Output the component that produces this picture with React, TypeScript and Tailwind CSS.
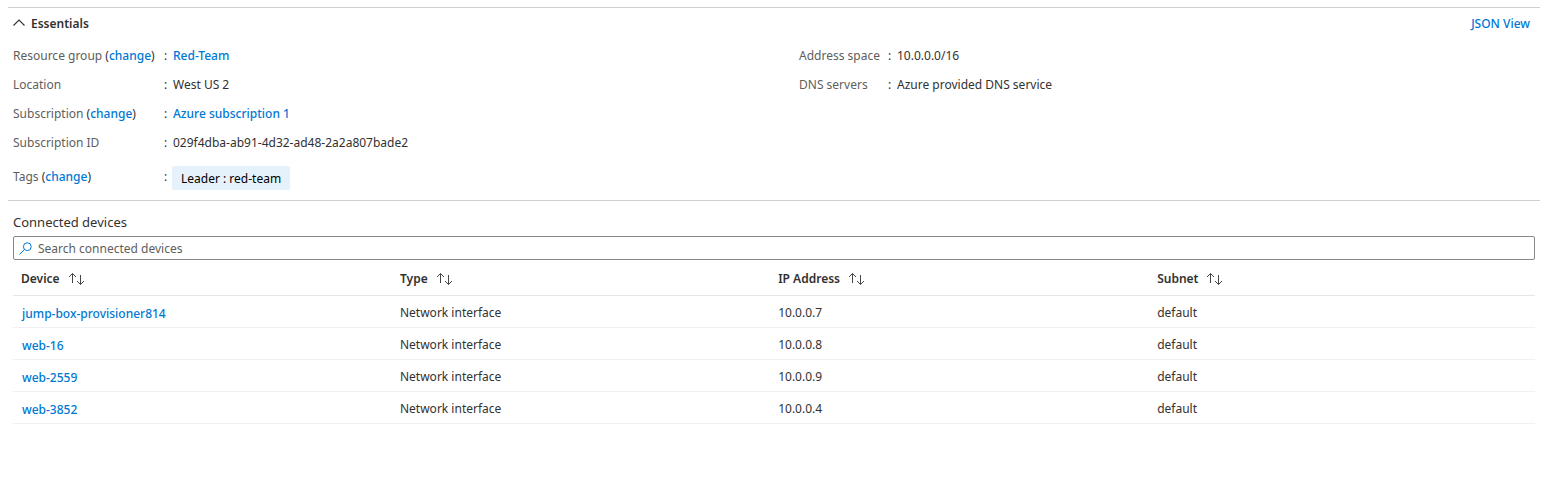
import { useState, type ReactNode } from "react";

type Field = { label: string; change?: boolean; value: ReactNode };

const linkClass = "font-medium text-[#0078d4] hover:underline";

const leftFields: Field[] = [
  { label: "Resource group", change: true, value: <a href="#group" className={linkClass}>Red-Team</a> },
  { label: "Location", value: "West US 2" },
  { label: "Subscription", change: true, value: <a href="#subscription" className={linkClass}>Azure subscription 1</a> },
  { label: "Subscription ID", value: "029f4dba-ab91-4d32-ad48-2a2a807bade2" },
];

const rightFields: Field[] = [
  { label: "Address space", value: "10.0.0.0/16" },
  { label: "DNS servers", value: "Azure provided DNS service" },
];

const columns = ["Device", "Type", "IP Address", "Subnet"];

const devices = [
  { name: "jump-box-provisioner814", type: "Network interface", ip: "10.0.0.7", subnet: "default" },
  { name: "web-16", type: "Network interface", ip: "10.0.0.8", subnet: "default" },
  { name: "web-2559", type: "Network interface", ip: "10.0.0.9", subnet: "default" },
  { name: "web-3852", type: "Network interface", ip: "10.0.0.4", subnet: "default" },
];

function FieldLabel({ label, change }: { label: string; change?: boolean }) {
  return (
    <dt className="text-[#605e5c]">
      {label}
      {change && (
        <>
          {" "}
          <span className="text-[#323130]">
            (<a href="#change" className={linkClass}>change</a>)
          </span>
        </>
      )}
    </dt>
  );
}

function SortIcon() {
  return (
    <svg viewBox="0 0 18 14" className="h-3.5 w-[18px]" fill="none" stroke="#484644" strokeWidth="1" aria-hidden="true">
      <path d="M4.500 11V1.500M1 5l3.500-3.500L8 5M12.500 3v9.500M9 9l3.500 3.500L16 9" />
    </svg>
  );
}

export default function App() {
  const [open, setOpen] = useState(true);
  const [query, setQuery] = useState("");
  const shown = devices.filter((d) => d.name.includes(query.toLowerCase()));

  return (
    <main className="bg-white pt-[7px] pr-[17px] pl-2 font-['Noto_Sans',sans-serif] text-xs text-[#323130]">
      <section className="border-y border-[#d2d0ce] pr-[5px] pb-2.5 pl-[5px]">
        <div className="flex items-center justify-between pt-1.5 pr-[5px]">
          <button type="button" aria-expanded={open} onClick={() => setOpen(!open)} className="flex h-5 items-center gap-1.5 font-semibold">
            <svg viewBox="0 0 12 10" className={open ? "h-2.5 w-3" : "h-2.5 w-3 rotate-180"} fill="none" stroke="#323130" strokeWidth="1.1" aria-hidden="true">
              <path d="M.5 6.500 6 1l5.500 5.500" />
            </svg>
            Essentials
          </button>
          <a href="#json" className={linkClass}>JSON View</a>
        </div>
        {open && (
          <div className="grid grid-cols-2 gap-x-[50px] pt-[7px]">
            <dl>
              {leftFields.map((f) => (
                <div key={f.label} className="grid h-[29px] grid-cols-[151px_9px_1fr] items-center">
                  <FieldLabel label={f.label} change={f.change} />
                  <span>:</span>
                  <dd>{f.value}</dd>
                </div>
              ))}
              <div className="grid grid-cols-[151px_8px_1fr] items-start pt-[9px] leading-[22px]">
                <FieldLabel label="Tags" change />
                <span>:</span>
                <dd>
                  <span className="inline-flex h-6 items-center rounded-xs bg-[#e5f1fb] px-[9px] pt-0.5 align-top text-black">Leader : red-team</span>
                </dd>
              </div>
            </dl>
            <dl>
              {rightFields.map((f) => (
                <div key={f.label} className="grid h-[29px] grid-cols-[89px_9px_1fr] items-center">
                  <FieldLabel label={f.label} />
                  <span>:</span>
                  <dd>{f.value}</dd>
                </div>
              ))}
            </dl>
          </div>
        )}
      </section>

      <section className="px-[5px] pt-[11px]">
        <label htmlFor="device-search" className="block pb-1 text-[13px] leading-5">Connected devices</label>
        <div className="flex h-6 items-center gap-1.5 rounded-xs border border-[#8a8886] px-[5px]">
          <svg viewBox="0 0 13 13" className="size-[13px]" fill="none" stroke="#0078d4" strokeWidth="1" aria-hidden="true">
            <circle cx="8.300" cy="4.700" r="3.900" />
            <path d="M5.500 7.500.5 12.500" />
          </svg>
          <input
            id="device-search"
            type="text"
            value={query}
            onChange={(e) => setQuery(e.target.value)}
            placeholder="Search connected devices"
            className="min-w-0 flex-1 pt-0.5 outline-none placeholder:text-[#605e5c]"
          />
        </div>
        <table className="w-full table-fixed border-collapse text-left">
          <colgroup>
            <col className="w-[24.9%]" />
            <col className="w-[24.85%]" />
            <col className="w-[24.9%]" />
            <col />
          </colgroup>
          <thead>
            <tr className="h-[35px] border-b border-[#e6e6e6]">
              {columns.map((c) => (
                <th key={c} scope="col" className="px-2 pt-[3px] font-semibold">
                  <button type="button" className="flex items-center gap-2">
                    {c}
                    <SortIcon />
                  </button>
                </th>
              ))}
            </tr>
          </thead>
          <tbody>
            {shown.map((d) => (
              <tr key={d.name} className="h-8 border-b border-[#f0f0f0]">
                <td className="pt-1.5 pr-2 pl-[9px]"><a href={"#" + d.name} className={linkClass}>{d.name}</a></td>
                <td className="px-2 pt-1">{d.type}</td>
                <td className="px-2 pt-1">{d.ip}</td>
                <td className="px-2 pt-1">{d.subnet}</td>
              </tr>
            ))}
          </tbody>
        </table>
      </section>
    </main>
  );
}
